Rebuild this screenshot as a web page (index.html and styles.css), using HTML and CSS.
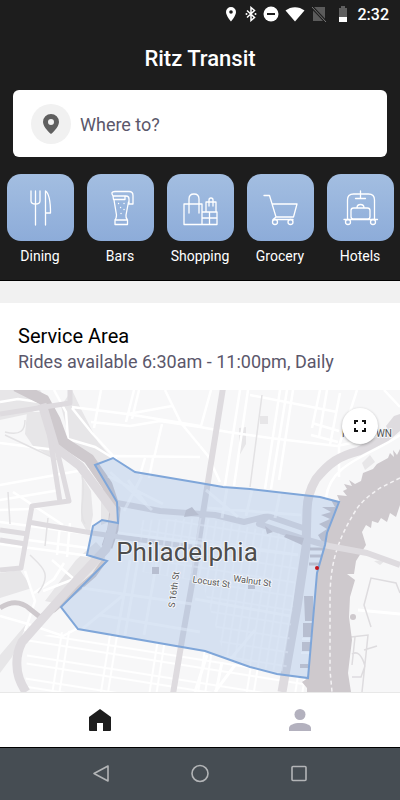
FILE: index.html
```html
<!DOCTYPE html>
<html lang="en">
<head>
    <meta charset="UTF-8">
    <meta name="viewport" content="width=device-width, initial-scale=1.0">
    <title>Ritz Transit</title>
    <link rel="stylesheet" href="styles.css">
</head>
<body>
    <header class="header">
        <!-- Status bar -->
        <div class="status-bar">
            <svg width="14" height="16" viewBox="0 0 14 16"><path fill="#fff" fill-rule="evenodd" d="M6 1a5 5 0 0 0-5 5c0 3.800 5 9.500 5 9.500s5-5.700 5-9.500a5 5 0 0 0-5-5zm0 3.200a1.800 1.800 0 1 1 0 3.600 1.800 1.800 0 0 1 0-3.600z"/></svg>
            <svg width="12" height="16" viewBox="0 0 12 16"><path fill="none" stroke="#fff" stroke-width="1.500" d="M2 4.500l7.500 7L6 14.500v-13l3.500 3-7.500 7"/><circle cx="1.500" cy="8" r="1" fill="#fff"/><circle cx="10.500" cy="8" r="1" fill="#fff"/></svg>
            <svg width="16" height="16" viewBox="0 0 16 16"><circle cx="8" cy="8" r="7.500" fill="#fff"/><path stroke="#1d1d1d" stroke-width="2" d="M4 8h8"/></svg>
            <svg width="20" height="16" viewBox="0 0 20 16"><path fill="#fff" d="M.5 4.500C6 0 14 0 19.500 4.500L10 15.500z"/></svg>
            <svg width="16" height="16" viewBox="0 0 16 16"><path fill="#5b5b5b" d="M3 1h11v14H2V6z"/><path stroke="#1d1d1d" stroke-width="3" d="M1 1l14 15"/><path stroke="#777" d="M1 1l14 15"/></svg>
            <svg class="battery" width="10" height="16" viewBox="0 0 10 16"><path fill="#5f5f5f" d="M3 0h4v2h2v9H1V2h2z"/><path fill="#fff" d="M1 11h8v5H1z"/></svg>
            <span class="clock">2:32</span>
        </div>

        <h1 class="title">Ritz Transit</h1>

        <label class="search">
            <span class="search-icon">
                <svg width="16" height="20" viewBox="0 0 16 20"><path fill="#5f5f5f" fill-rule="evenodd" d="M8 0a8 8 0 0 0-8 8c0 5.500 8 12 8 12s8-6.500 8-12a8 8 0 0 0-8-8zm0 5a3 3 0 1 1 0 6 3 3 0 0 1 0-6z"/></svg>
            </span>
            <input class="search-input" type="text" placeholder="Where to?" aria-label="Where to?">
        </label>

        <!-- Categories -->
        <nav class="categories">
            <a class="category" href="#dining">
                <span class="tile"><svg viewBox="0 0 67 67"><path d="M24 17v10q0 3 4.500 3T33 27V17M28.500 17v34M38.500 51V17c3 2 5 10 5 22h-5"/></svg></span>
                Dining
            </a>
            <a class="category" href="#bars">
                <span class="tile"><svg viewBox="0 0 67 67"><path d="M26 22q-3-4.500 2-4.500h14q4 0 4 4V30h-4v-5q0-3-3-3H26zM26 22l.5 3.500H38V22M27 26l2.500 15q0 3-1.500 5V50.500h12.500V46q-2-2-1.500-5l2.500-13M28.500 46h12"/><path d="M31.500 29.500h.1M37 29.500h.1M33.500 33.500h.1M37 35.500h.1M34 39.500h.1"/></svg></span>
                Bars
            </a>
            <a class="category" href="#shopping">
                <span class="tile"><svg viewBox="0 0 67 67"><path d="M35 50.500H17V30h18v20.500M22 39V25q0-5 5-5t5 5v14M39 38V28h10v10M42 32v-6q0-2 2-2t2 2v6M35 38h15v12.500H35zM35 44h15M42.500 38v12.500"/></svg></span>
                Shopping
            </a>
            <a class="category" href="#grocery">
                <span class="tile"><svg viewBox="0 0 67 67"><path d="M17 21.500h5.500L29 43h17.500L50 30H25M29 43l-3 2.500h20"/><circle cx="28" cy="48" r="2.500"/><circle cx="43.500" cy="48" r="2.500"/></svg></span>
                Grocery
            </a>
            <a class="category" href="#hotels">
                <span class="tile"><svg viewBox="0 0 67 67"><path d="M20.500 45V26q0-6 6-6h15q6 0 6 6v19M17 45.500h33.500M33.500 17v7M28.500 24.500h10M26.500 34h14q2.500 0 2.500 2.500v6q0 2.500-2.500 2.500h-14q-2.500 0-2.500-2.500v-6q0-2.500 2.500-2.500zM30 34q0-3.500 3.500-3.500T37 34"/><circle cx="21" cy="48" r="2.500"/><circle cx="46" cy="48" r="2.500"/></svg></span>
                Hotels
            </a>
        </nav>
    </header>

    <main class="content">
        <section class="service">
            <h2 class="service-title">Service Area</h2>
            <p class="service-hours">Rides available 6:30am - 11:00pm, Daily</p>
        </section>

        <!-- Map -->
        <section class="map">
            <svg class="map-svg" viewBox="0 0 400 302" preserveAspectRatio="xMidYMid slice" role="img" aria-label="Map of Philadelphia">
                <defs>
                    <pattern id="grid" width="8" height="14" patternUnits="userSpaceOnUse" patternTransform="rotate(9)">
                        <path d="M2 0v14M0 4h8" stroke="#fff" stroke-width="2"/>
                    </pattern>
                    <pattern id="blocks" width="48" height="23" patternUnits="userSpaceOnUse" patternTransform="rotate(9)">
                        <path d="M3 0v23M10 0v23M0 5h48M0 13h48" stroke="#fff" stroke-width="2"/>
                    </pattern>
                    <path id="area" d="M95 75l18-7 22 14 65 11 23 4 27 2 70 8 19 5-12 31-2 12-8 28-9 105-31-4-27-7-45-16-127-22-17-22 46-46-20-6 6-29 9-6 16 3-1-21z"/>
                    <clipPath id="area-clip"><use href="#area"/></clipPath>
                </defs>
                <rect width="400" height="302" fill="#f7f7f8"/>

                <!-- parks -->
                <g fill="#e7e6e8">
                    <path d="M27 22h20l10 48-24-14-8-12z"/>
                    <path d="M0 0h40l8 14-20 10-28 6z"/>
                    <path d="M82 86l9 15 2 24-4 20-8-14zM101 104l10 16-2 12-8 3zM76 170l20-18 9 10v8l-46 44-14-3zM0 183l20-3 12 18-32 10zM0 265l28-33-16 35-12 16zM260 26h8v8h-8zM239 38l7-1v17l-7 12z"/>
                    <path d="M362 73l8-8 5 7-10 8zM374 171l12-1-6 5z"/>
                    <path d="M72 0l9 19 17 33 13 15-16 8-26-27-8-32z"/>
                </g>
                <path fill="url(#blocks)" d="M28 249l50-10 127 22 45 16 58 11v14H25z"/>

                <!-- minor streets -->
                <g fill="none" stroke="#fff" stroke-width="2.500">
                    <path d="M54 0l12 22 2 27 27 8 18 11M72 17l55 7 73 12M91 32l39 4 30-5 40 6M101 0l-7 38M134 0l-8 32M139 0l-7 29M165 0l16 33 19 23M162 34l-8 34M128 24l44-8M72 18l20 25 25 27M114 66l86 1M145 68l-5 17M153 68l-4 20"/>
                    <path d="M200 37l28 5 42 6 67 8 24-5M211 0l-10 36M240 0l-15 95M248 0l-14 96M280 0l-15 99M287 0l-16 99M293 0l-14 90M320 0l-8 38M327 0l-8 47M340 3l-10 52M357 0l-18 56M250 5l87 17M312 33l27 8M311 45l27 7M384 0l16 17"/>
                    <path d="M200 56l8 10 12 26M339 56v31M400 45c-32 22-70 28-74 63"/>
                    <path d="M0 12l18-3 28 4M0 53l56 7M0 95l100-18M0 110l60-10M13 102l50 33M0 120l30-1M0 154l90 12M0 132l90 12M28 150l60 8M60 135l-3 30M70 133l-3 34M25 181l10 30-10 30M0 226l28 8 35 12 15-8M34 203l20-14 10-16M52 170l22 19M43 201l31-12"/>
                </g>
                <path fill="none" stroke="#fff" stroke-width="3" d="M358 220l42 4M207 265l-12 37M222 272l-6 30M235 275l-20 27"/>
                <g fill="none" stroke="#e3e2e4" stroke-width="1.500">
                    <path d="M262 5l-12 92M8 102l2 32M5 42c16 4 20-2 20-12M5 45l53 25M82 86c5 20-5 34 3 48M30 165c10 10 24 18 8 38M48 128l-3 28"/>
                    <path stroke="#dedcdf" d="M400 203l-4-10-25-5-7 27 7 22M351 247l17-2-6 57M355 247l-3 28M352 287h9l4-11q-5-17-13-12M364 260l13-4"/>
                </g>

                <!-- rivers -->
                <path fill="none" stroke="#cec9cd" stroke-width="11" d="M16-4l28 14 11 20 8 22 26 17 18 26 8 24-2 20-6 18"/>
                <path fill="none" stroke="#cec9cd" stroke-width="5" d="M0 218c12-8 22-6 30 1l10 8 14-7 40-35 10-14"/>
                <path fill="#cec9cd" d="M400 59L397 65 393 60 394 67 390 63 388 68 377 74 373 79 363 83 361 91 355 94 349 90 352 96 344 94 347 99 343 101 347 106 337 105 340 112 331 110 335 117 322 117 331 122 321 125 330 129 319 134 327 139 318 145 324 155 317 183 313 230 308 288 302 292 307 298V302H351L348 283 352 250 349 227 350 207 355 190 347 184 354 184 356 171 366 155 362 142 366 135 371 138 372 131 378 133 381 128 387 132 390 123 396 127 400 115z"/>
                <path fill="#dedbdf" d="M386 36l8-10 6-2v12l-10 8z"/>
                <circle cx="353" cy="227" r="3" fill="#cec9cd"/>
                <path fill="none" stroke="#f4f2f4" stroke-width="1.500" stroke-dasharray="4 3" d="M400 88l-20 10q-18 12-24 22c-20 32-26 56-26 90v70l2 22"/>

                <!-- highways -->
                <g fill="none" stroke="#dedbdf" stroke-width="5" stroke-linejoin="round">
                    <path stroke-width="9" d="M42 14l13 43 25 19 18 24 17 23-4 20-5 16-28 30-26 29-30 34q-6 12-5 24 0 12 9 26"/>
                    <path stroke-width="9" d="M400 35l-14 12-27 14c-20 5-30 12-43 28q-9 15-9 32l-1 36-9 60-15 85"/>
                    <path stroke-width="6" d="M223-2l-20 125-9 60-12 67-9 54"/>
                    <path stroke-width="6" d="M117 113l43 8 55 4 29 7 24-6 35 12M267 127l-8 7 45 15 25 7 38 7 33 12"/>
                    <path d="M0 24l70-11V-2M46 22l14 90M57 60l12 51-37 5-11 62-21 2M0 140l28 4M0 150l26 4M28 132l64 11 100 14"/>
                </g>

                <!-- service area streets -->
                <g clip-path="url(#area-clip)">
                    <path fill="url(#grid)" opacity="0.500" d="M140 130l65-2 95 20-14 134-60-10-24-80-60-10z"/>
                    <path fill="none" stroke="#fff" stroke-width="3" opacity="0.600" d="M108 86l55 28M110 82l42 38M142 86l-18 35M128 90l18 24M206 100l32 27M208 118l93 7M227 98l-5 30M252 100l-6 26M280 103l-5 25M82 198l110 16M100 225l100 17M126 203l-45 37M130 170l-13 75M138 170l-13 75M157 170l-13 75M195 209l95 17M118 143l180 22M255 240l-27 32"/>
                    <path fill="#cec9cd" d="M286 144l18 4-2 7-18-8zM186 120l6-3 4 5 3 3-15 2zM265 136l8 6-6 2zM304 206h9v25h-8zM303 233h9v14h-9zM302 252h8v9h-8zM300 274h8v4h-8zM152 177h7v7h-7zM248 194h7v5h-7z"/>
                    <path stroke="#fff" stroke-width="2" d="M302 249h10M301 263h9"/>
                    <path stroke="#cec9cd" stroke-width="3" d="M310 159h13M310 166h12M309 174h10"/>
                </g>

                <use class="area-shape" href="#area"/>
                <circle cx="317" cy="178" r="2" fill="#c4161c"/>

                <!-- labels -->
                <g class="map-label" text-anchor="middle">
                    <text class="city" x="187" y="171">Philadelphia</text>
                    <text class="street" transform="translate(177 200) rotate(-82)">S 16th St</text>
                    <text class="street" transform="translate(211 195) rotate(8)">Locust St</text>
                    <text class="street" transform="translate(252 194) rotate(8)">Walnut St</text>
                    <text x="367" y="47">FISHTOWN</text>
                </g>
            </svg>
            <button class="expand" type="button" aria-label="Expand map">
                <svg width="12" height="12" viewBox="0 0 12 12"><path fill="none" stroke="#111" stroke-width="2" d="M1 4V1h3M8 1h3v3M11 8v3H8M4 11H1V8"/></svg>
            </button>
        </section>
    </main>

    <nav class="tabs">
        <a class="tab" href="#home" aria-label="Home">
            <svg width="24" height="24" viewBox="0 0 24 24"><path fill="#1d1d1d" d="M12 1l11 8v13q0 1-1 1h-7v-8H9v8H2q-1 0-1-1V9z"/></svg>
        </a>
        <a class="tab" href="#profile" aria-label="Profile">
            <svg width="24" height="24" viewBox="0 0 24 24"><circle cx="12" cy="6.500" r="5.500" fill="#b3b1be"/><path fill="#b3b1be" d="M1 23v-3c0-3 5-5 11-5s11 2 11 5v3z"/></svg>
        </a>
    </nav>

    <!-- Android navigation -->
    <footer class="system-nav">
        <button class="system-button" type="button" aria-label="Back"><svg width="20" height="20" viewBox="0 0 20 20"><path d="M18 2v15L4 9.500z"/></svg></button>
        <button class="system-button" type="button" aria-label="Home"><svg width="20" height="20" viewBox="0 0 20 20"><circle cx="10" cy="9.500" r="8"/></svg></button>
        <button class="system-button" type="button" aria-label="Recent apps"><svg width="20" height="20" viewBox="0 0 20 20"><rect x="2" y="2.500" width="14" height="14" rx="1"/></svg></button>
    </footer>
</body>
</html>
```

FILE: styles.css
```css
* {
    box-sizing: border-box;
}
body {
    display: flex;
    flex-direction: column;
    min-height: 100vh;
    margin: 0;
    font-family: Roboto, "Liberation Sans", sans-serif;
    background: #fff;
    color: #111;
}
svg {
    display: block;
}
button {
    padding: 0;
    border: none;
    cursor: pointer;
}
.header {
    background: #1d1d1d;
    color: #fff;
    padding-bottom: 14px;
    border-bottom: 1px solid #000;
}
.status-bar {
    display: flex;
    justify-content: flex-end;
    align-items: center;
    gap: 6px;
    height: 28px;
    padding-right: 11px;
}
.battery {
    margin-left: 5px;
}
.clock {
    font-size: 16px;
    font-weight: 500;
    margin-left: 4px;
}
.title {
    margin: 0;
    padding: 17px 0;
    font-size: 22px;
    line-height: 28px;
    font-weight: 500;
    text-align: center;
}
.search {
    display: flex;
    align-items: center;
    gap: 9px;
    height: 67px;
    margin: 0 13px 17px;
    padding: 0 18px;
    background: #fff;
    border-radius: 6px;
}
.search-icon {
    display: flex;
    justify-content: center;
    align-items: center;
    flex: none;
    width: 40px;
    height: 40px;
    border-radius: 50%;
    background: #f1f1f1;
}
.search-input {
    flex: 1;
    min-width: 0;
    padding: 2px 0 0;
    border: none;
    outline: none;
    background: none;
    font-family: inherit;
    font-size: 18px;
    color: #5b576b;
}
.search-input::placeholder {
    color: #5b576b;
    opacity: 1;
}
.categories {
    display: grid;
    grid-template-columns: repeat(5, 1fr);
}
.category {
    display: flex;
    flex-direction: column;
    align-items: center;
    gap: 5px;
    color: #fff;
    font-size: 14px;
    line-height: 20px;
    text-decoration: none;
}
.tile {
    width: 67px;
    height: 67px;
    border-radius: 14px;
    background: linear-gradient(#a3bee1, #8dacd9);
}
.tile svg {
    fill: none;
    stroke: #fff;
    stroke-width: 1.3px;
    stroke-linecap: round;
    stroke-linejoin: round;
}
.content {
    display: flex;
    flex-direction: column;
    flex: 1;
    border-top: 22px solid #f1f1f1;
}
.service {
    padding: 20px 18px 16px;
}
.service-title {
    margin: 0;
    font-size: 20px;
    line-height: 26px;
    font-weight: 400;
    color: #000;
}
.service-hours {
    margin: 0;
    padding-top: 1px;
    font-size: 18px;
    line-height: 24px;
    color: #5b576b;
}
.map {
    display: flex;
    flex: 1;
    position: relative;
    min-height: 302px;
    border-bottom: 1px solid #e8e8e8;
}
.map-svg {
    width: 100%;
    height: auto;
}
.area-shape {
    fill: rgba(116, 158, 218, 0.25);
    stroke: #7fa6d9;
    stroke-width: 2px;
}
.map-label {
    font-size: 10px;
    fill: #555;
    stroke: #f4f6fa;
    stroke-width: 2px;
    stroke-linejoin: round;
    paint-order: stroke;
}
.city {
    font-size: 26px;
    fill: #4d4d4d;
}
.street {
    font-size: 9px;
}
.expand {
    position: absolute;
    top: 18px;
    right: 22px;
    display: flex;
    justify-content: center;
    align-items: center;
    width: 36px;
    height: 36px;
    border-radius: 50%;
    background: #fff;
    box-shadow: 0 1px 3px rgba(0, 0, 0, 0.3);
}
.tabs {
    display: grid;
    grid-template-columns: 1fr 1fr;
    height: 54px;
    background: #fff;
}
.tab {
    display: flex;
    justify-content: center;
    align-items: center;
}
.system-nav {
    display: grid;
    grid-template-columns: repeat(3, 100px);
    justify-content: center;
    height: 53px;
    border-top: 1px solid #000;
    background: #464d53;
}
.system-button {
    display: flex;
    justify-content: center;
    align-items: center;
    background: none;
}
.system-button svg {
    fill: none;
    stroke: #b3b5b7;
    stroke-width: 1.6px;
    stroke-linejoin: round;
}
```
